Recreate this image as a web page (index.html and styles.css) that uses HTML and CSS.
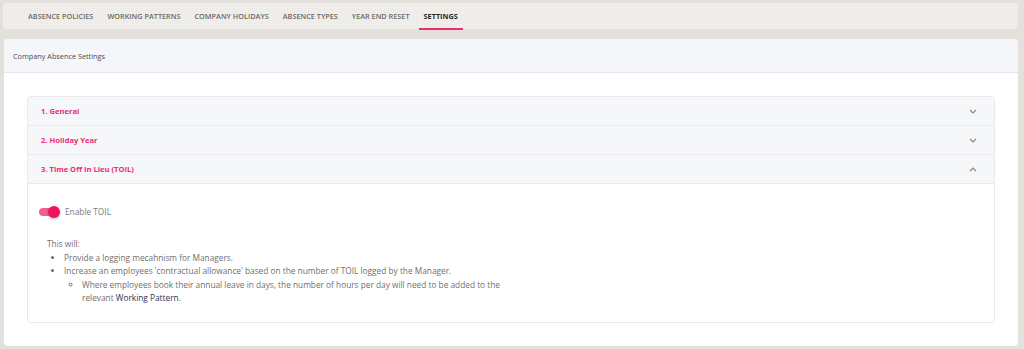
FILE: index.html
```html
<!DOCTYPE html>
<html lang="en">
<head>
    <meta charset="UTF-8">
    <meta name="viewport" content="width=device-width, initial-scale=1.0">
    <title>Absence Settings</title>
    <link rel="stylesheet" href="styles.css">
</head>
<body>
    <nav class="tabs">
        <a class="tab">Absence Policies</a>
        <a class="tab">Working Patterns</a>
        <a class="tab">Company Holidays</a>
        <a class="tab">Absence Types</a>
        <a class="tab">Year End Reset</a>
        <a class="tab active">Settings</a>
    </nav>

    <div class="card">
        <div class="card-header">Company Absence Settings</div>
        <div class="card-body">
            <div class="accordion">
                <div class="acc-item">
                    <div class="acc-head">
                        <span>1. General</span>
                        <svg class="chevron" width="8" height="5" viewBox="0 0 8 5"><path d="M1 1l3 3 3-3" fill="none" stroke="#888" stroke-width="1.2"/></svg>
                    </div>
                </div>
                <div class="acc-item">
                    <div class="acc-head">
                        <span>2. Holiday Year</span>
                        <svg class="chevron" width="8" height="5" viewBox="0 0 8 5"><path d="M1 1l3 3 3-3" fill="none" stroke="#888" stroke-width="1.2"/></svg>
                    </div>
                </div>
                <div class="acc-item open">
                    <div class="acc-head">
                        <span>3. Time Off In Lieu (TOIL)</span>
                        <svg class="chevron" width="8" height="5" viewBox="0 0 8 5"><path d="M1 4l3-3 3 3" fill="none" stroke="#888" stroke-width="1.2"/></svg>
                    </div>
                    <div class="acc-body">
                        <label class="switch-row">
                            <span class="switch"><span class="knob"></span></span>
                            Enable TOIL
                        </label>
                        <div class="info">
                            <p>This will:</p>
                            <ul>
                                <li>Provide a logging mecahnism for Managers.</li>
                                <li>Increase an employees 'contractual allowance' based on the number of TOIL logged by the Manager.
                                    <ul>
                                        <li>Where employees book their annual leave in days, the number of hours per day will need to be added to the relevant <span class="link">Working Pattern</span>.</li>
                                    </ul>
                                </li>
                            </ul>
                        </div>
                    </div>
                </div>
            </div>
        </div>
    </div>
</body>
</html>
```

FILE: styles.css
```css
body {
    margin: 0;
    padding: 3px 6px 5px 4px;
    background-color: #e4e1dd;
    font-family: "Open Sans", Arial, sans-serif;
    font-size: 8.3px;
    color: #6f6f6f;
}
.tabs {
    display: flex;
    gap: 4px;
    height: 26px;
    padding: 0 0 0 20px;
    background-color: #efedea;
    border-radius: 4px;
    margin-left: -1px;
}
.tab {
    display: flex;
    align-items: center;
    padding: 0 5px;
    font-size: 7.3px;
    font-weight: 600;
    text-transform: uppercase;
    color: #6d6a66;
    border-bottom: 2px solid transparent;
    margin-bottom: -1px;
}
.tab.active {
    color: #2a2a2a;
    font-weight: 700;
    border-bottom-color: #ee2a78;
}
.card {
    margin-top: 10px;
    background-color: #fff;
    border-radius: 4px;
    overflow: hidden;
}
.card-header {
    height: 33px;
    display: flex;
    align-items: center;
    padding-left: 9px;
    background-color: #f5f6f9;
    border-bottom: 1px solid #e6e6ea;
    color: #4a4a55;
    font-size: 7.3px;
}
.card-body {
    padding: 23px;
}
.accordion {
    border: 1px solid #e9e9ec;
    border-radius: 4px;
    overflow: hidden;
}
.acc-head {
    height: 28px;
    display: flex;
    align-items: center;
    justify-content: space-between;
    padding: 0 17px 0 13px;
    background-color: #f6f7f9;
    color: #ee2a78;
    font-weight: 700;
    font-size: 7.6px;
    border-bottom: 1px solid #e9e9ec;
}
.acc-body {
    padding: 22px 11px 17px;
}
.switch-row {
    display: flex;
    align-items: center;
    gap: 7px;
    color: #7a7a7a;
}
.switch {
    position: relative;
    width: 19px;
    height: 8px;
    border-radius: 4px;
    background-color: #f25d98;
}
.knob {
    position: absolute;
    right: -2px;
    top: -2px;
    width: 12px;
    height: 12px;
    border-radius: 50%;
    background-color: #f0135f;
    box-shadow: 0 1px 3px rgba(0, 0, 0, 0.3);
}
.info {
    margin-top: 20px;
    padding-left: 8px;
    max-width: 455px;
    line-height: 13.6px;
}
.info p {
    margin: 0;
}
.info ul {
    margin: 0;
    padding-left: 17px;
}
.info ul ul {
    list-style-type: circle;
    padding-left: 18px;
}
.link {
    color: #2b2f5c;
}
```
